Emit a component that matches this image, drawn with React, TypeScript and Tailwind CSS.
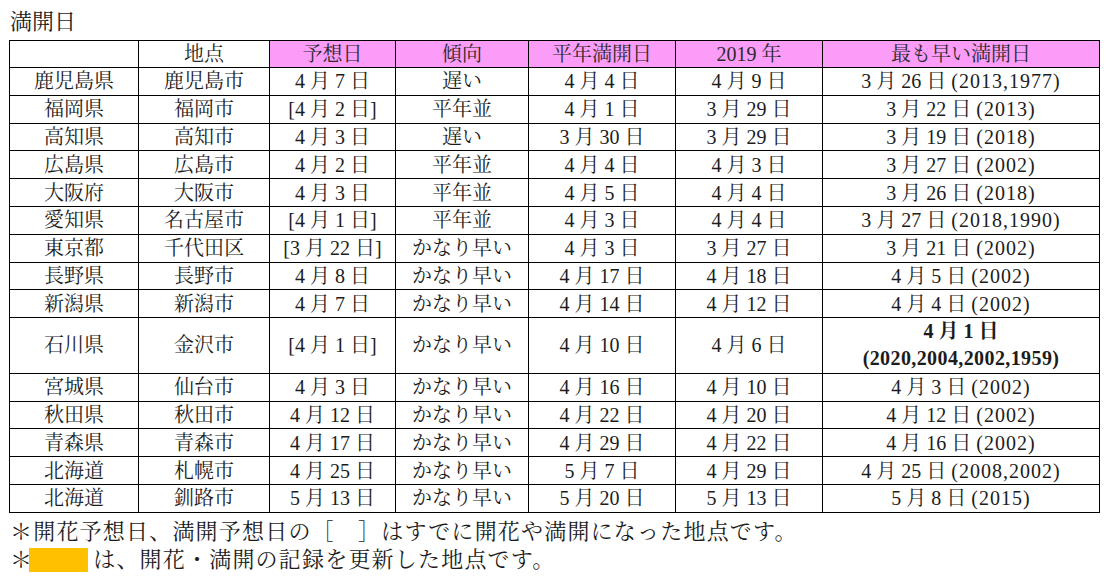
import React from "react";

type Row = [string, string, string, string, string, string, string, string];

const rows: Row[] = [
  ["鹿児島県", "鹿児島市", "4 月 7 日", "遅い", "4 月 4 日", "4 月 9 日", "3 月 26 日", "(2013,1977)"],
  ["福岡県", "福岡市", "[4 月 2 日]", "平年並", "4 月 1 日", "3 月 29 日", "3 月 22 日", "(2013)"],
  ["高知県", "高知市", "4 月 3 日", "遅い", "3 月 30 日", "3 月 29 日", "3 月 19 日", "(2018)"],
  ["広島県", "広島市", "4 月 2 日", "平年並", "4 月 4 日", "4 月 3 日", "3 月 27 日", "(2002)"],
  ["大阪府", "大阪市", "4 月 3 日", "平年並", "4 月 5 日", "4 月 4 日", "3 月 26 日", "(2018)"],
  ["愛知県", "名古屋市", "[4 月 1 日]", "平年並", "4 月 3 日", "4 月 4 日", "3 月 27 日", "(2018,1990)"],
  ["東京都", "千代田区", "[3 月 22 日]", "かなり早い", "4 月 3 日", "3 月 27 日", "3 月 21 日", "(2002)"],
  ["長野県", "長野市", "4 月 8 日", "かなり早い", "4 月 17 日", "4 月 18 日", "4 月 5 日", "(2002)"],
  ["新潟県", "新潟市", "4 月 7 日", "かなり早い", "4 月 14 日", "4 月 12 日", "4 月 4 日", "(2002)"],
  ["石川県", "金沢市", "[4 月 1 日]", "かなり早い", "4 月 10 日", "4 月 6 日", "4 月 1 日", "(2020,2004,2002,1959)"],
  ["宮城県", "仙台市", "4 月 3 日", "かなり早い", "4 月 16 日", "4 月 10 日", "4 月 3 日", "(2002)"],
  ["秋田県", "秋田市", "4 月 12 日", "かなり早い", "4 月 22 日", "4 月 20 日", "4 月 12 日", "(2002)"],
  ["青森県", "青森市", "4 月 17 日", "かなり早い", "4 月 29 日", "4 月 22 日", "4 月 16 日", "(2002)"],
  ["北海道", "札幌市", "4 月 25 日", "かなり早い", "5 月 7 日", "4 月 29 日", "4 月 25 日", "(2008,2002)"],
  ["北海道", "釧路市", "5 月 13 日", "かなり早い", "5 月 20 日", "5 月 13 日", "5 月 8 日", "(2015)"],
];

const headers = ["", "地点", "予想日", "傾向", "平年満開日", "2019 年", "最も早い満開日"];

export default function App() {
  return (
    <div
      className="w-[1114px] h-[585px] bg-white text-[#1c1c1c] overflow-hidden"
      style={{ fontFamily: '"Liberation Serif", "Noto Serif CJK JP", "Noto Sans CJK JP", serif' }}
    >
      <div className="pl-[10px] pt-[9px] h-[40px] text-[22px] leading-[26px]">満開日</div>
      <table className="ml-[9px] table-fixed border-collapse border border-black text-[20px] leading-[22px]">
        <colgroup>
          <col className="w-[129px]" />
          <col className="w-[131px]" />
          <col className="w-[126px]" />
          <col className="w-[133px]" />
          <col className="w-[147px]" />
          <col className="w-[147px]" />
          <col className="w-[277px]" />
        </colgroup>
        <thead>
          <tr className="h-[27px]">
            {headers.map((h, i) => (
              <th
                key={i}
                className={`border border-black p-0 font-normal text-center text-[#2a2a2a] ${i >= 2 ? "bg-[#fb9cf9]" : "bg-white"}`}
              >
                {h}
              </th>
            ))}
          </tr>
        </thead>
        <tbody>
          {rows.map((r, ri) => {
            const special = r[0] === "石川県";
            return (
              <tr key={ri} className={special ? "h-[55.6px]" : "h-[27.8px]"}>
                {r.slice(0, 6).map((c, ci) => (
                  <td key={ci} className="border border-black p-0 text-center whitespace-nowrap">
                    {c}
                  </td>
                ))}
                <td className="border border-black p-0 text-center whitespace-nowrap">
                  {special ? (
                    <div className="font-bold leading-[27px]">
                      <div>{r[6]}</div>
                      <div className="tracking-[0.4px]">{r[7]}</div>
                    </div>
                  ) : (
                    <span>
                      {r[6]}
                      <span className="ml-[5px] tracking-[1px]">{r[7]}</span>
                    </span>
                  )}
                </td>
              </tr>
            );
          })}
        </tbody>
      </table>
      <div className="pl-[10px] pt-[5px] text-[22px] leading-[28px] whitespace-nowrap tracking-[1.2px]">
        <div>＊開花予想日、満開予想日の［　］はすでに開花や満開になった地点です。</div>
        <div className="flex items-center">
          <span>＊</span>
          <span className="inline-block w-[59px] h-[24px] bg-[#ffc000] ml-[-4px] mr-[5px]"></span>
          <span>は、開花・満開の記録を更新した地点です。</span>
        </div>
      </div>
    </div>
  );
}
